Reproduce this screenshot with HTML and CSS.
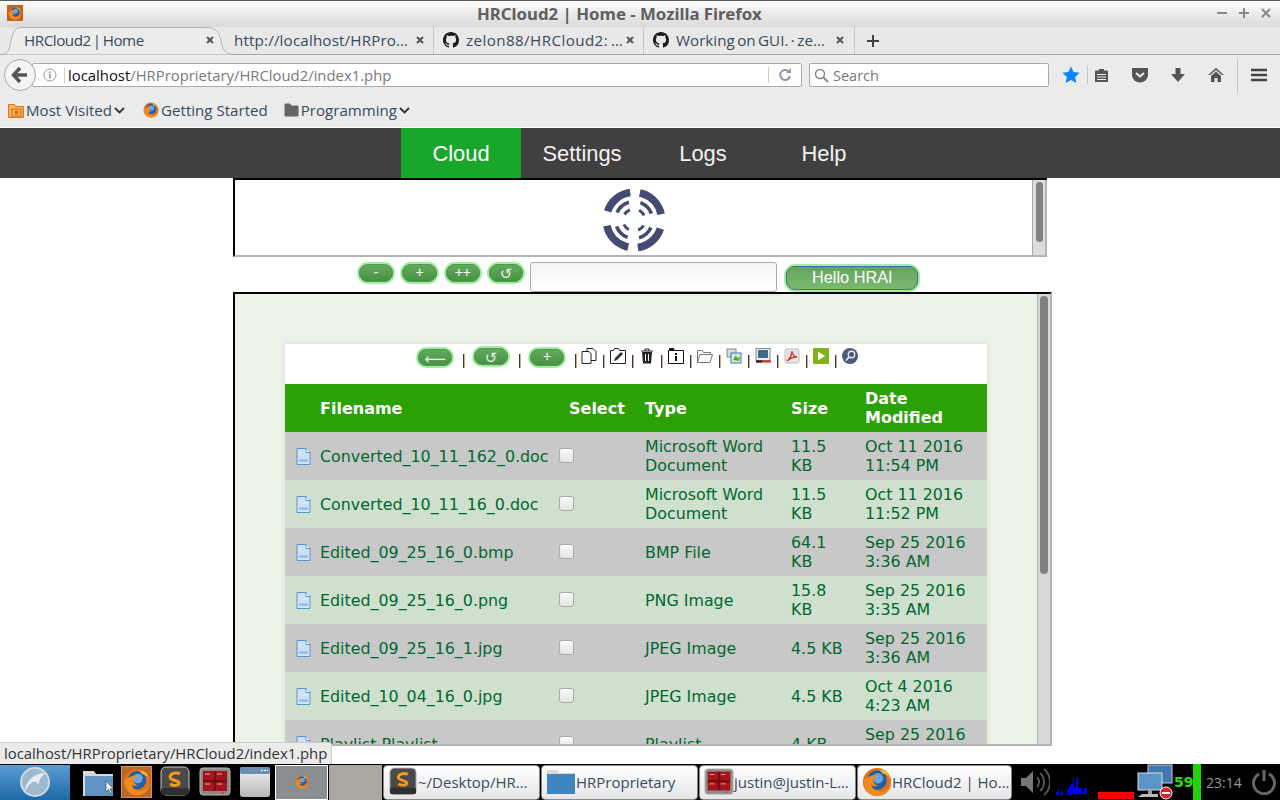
FILE: index.html
```html
<!DOCTYPE html>
<html lang="en">
<head>
<meta charset="utf-8">
<title>HRCloud2 | Home</title>
<link rel="stylesheet" href="styles.css">
</head>
<body>
<svg class="defs" width="0" height="0">
  <symbol id="ff" viewBox="0 0 32 32">
    <circle cx="16" cy="16" r="15" fill="#e8701a"/>
    <circle cx="16" cy="14" r="10.5" fill="#1f5fa8"/>
    <circle cx="17" cy="12" r="5.5" fill="#6ea6dc"/>
    <path d="M2 13c-1 9 5 18 14 18 8 0 14-5 15-13-2 5-6 8-11 8-6 0-9-3-10-7 2 2 5 2 7 1-3-1-5-3-5-6 1-3 3-5 5-6-5 0-10 2-13 5z" fill="#f28a1c"/>
    <path d="M19 3c4 0 9 3 11 9-2-3-5-5-8-5z" fill="#f7c12b"/>
  </symbol>
  <symbol id="gh" viewBox="0 0 16 16">
    <path fill="#1b1b1b" d="M8 0C3.58 0 0 3.58 0 8c0 3.54 2.29 6.53 5.47 7.59.4.07.55-.17.55-.38 0-.19-.01-.82-.01-1.49-2.01.37-2.53-.49-2.69-.94-.09-.23-.48-.94-.82-1.13-.28-.15-.68-.52-.01-.53.63-.01 1.08.58 1.23.82.72 1.21 1.87.87 2.33.66.07-.52.28-.87.51-1.07-1.78-.2-3.64-.89-3.64-3.95 0-.87.31-1.59.82-2.15-.08-.2-.36-1.02.08-2.12 0 0 .67-.21 2.2.82.64-.18 1.32-.27 2-.27.68 0 1.36.09 2 .27 1.53-1.04 2.2-.82 2.2-.82.44 1.1.16 1.92.08 2.12.51.56.82 1.27.82 2.15 0 3.07-1.87 3.75-3.65 3.95.29.25.54.73.54 1.48 0 1.07-.01 1.93-.01 2.2 0 .21.15.46.55.38A8.013 8.013 0 0016 8c0-4.42-3.58-8-8-8z"/>
  </symbol>
  <symbol id="close" viewBox="0 0 10 10">
    <path d="M2 2l6 6M8 2l-6 6" stroke="#555" stroke-width="2" fill="none"/>
  </symbol>
  <symbol id="file" viewBox="0 0 15 17">
    <path d="M1 .5h9l4 4v12H1z" fill="#cfe2f7" stroke="#5b93d2"/>
    <path d="M10 .5v4h4" fill="#fff" stroke="#5b93d2"/>
    <rect x="3" y="11.5" width="9" height="2" fill="#84b3e6"/>
  </symbol>
  <symbol id="sublime" viewBox="0 0 32 32">
    <rect x="2" y="1" width="28" height="28" rx="5" fill="#4a4a4a" stroke="#c8c8c8"/>
    <rect x="2" y="22" width="28" height="7" rx="2" fill="#2f2f2f"/>
    <path d="M21 8c-3-2-10-1-10 3s9 3 9 6-6 3-9 1" fill="none" stroke="#f09a22" stroke-width="3"/>
  </symbol>
  <symbol id="term" viewBox="0 0 32 32">
    <rect x="1" y="2" width="30" height="27" rx="3" fill="#8a8a86" stroke="#bbb"/>
    <rect x="4" y="5" width="24" height="20" fill="#a5141b"/>
    <path d="M4 15h24M16 5v20" stroke="#4a0508"/>
    <path d="M6 8h5M18 8h5M6 18h5M18 18h5" stroke="#f0a8a8"/>
    <circle cx="24" cy="27" r="1" fill="#e03030"/>
  </symbol>
</svg>

<header class="title-bar">
  <span class="title-icon"><svg width="14" height="14"><use href="#ff"/></svg></span>
  <span class="title-text">HRCloud2 | Home - Mozilla Firefox</span>
  <div class="win-btns">
    <svg width="12" height="12" viewBox="0 0 12 12"><path d="M1 6h10" stroke="#888" stroke-width="2"/></svg>
    <svg width="12" height="12" viewBox="0 0 12 12"><path d="M1 6h10M6 1v10" stroke="#888" stroke-width="2"/></svg>
    <svg width="12" height="12" viewBox="0 0 12 12"><path d="M2 2l8 8M10 2l-8 8" stroke="#888" stroke-width="2"/></svg>
  </div>
</header>

<nav class="tab-bar">
  <svg class="tab-shape" width="234" height="28" viewBox="0 0 234 28"><path d="M0 27.500C8 27.500 9 24 11 14 13 4 15 .5 22 .5H206C216 .5 219 5 221 14 223 23 225 27.500 234 27.500" fill="#ececec" stroke="#b4b4b4"/></svg>
  <div class="tab tab-active"><span class="tab-label">HRCloud2 | Home</span><svg class="tab-x"><use href="#close"/></svg></div>
  <div class="tab tab-2"><span class="tab-label">http://localhost/HRPro…</span><svg class="tab-x"><use href="#close"/></svg></div>
  <div class="tab tab-3"><svg class="tab-gh"><use href="#gh"/></svg><span class="tab-label">zelon88/HRCloud2: …</span><svg class="tab-x"><use href="#close"/></svg></div>
  <div class="tab tab-4"><svg class="tab-gh"><use href="#gh"/></svg><span class="tab-label">Working on GUI. · ze…</span><svg class="tab-x"><use href="#close"/></svg></div>
  <svg class="new-tab" width="16" height="16" viewBox="0 0 16 16"><path d="M2 8h12M8 2v12" stroke="#444" stroke-width="2"/></svg>
</nav>

<div class="nav-bar">
  <div class="back-btn"><svg width="18" height="18" viewBox="0 0 18 18"><path d="M9 2L2.500 9 9 16M3 9h13" fill="none" stroke="#555" stroke-width="3.400"/></svg></div>
  <div class="url-box">
    <svg class="info" width="14" height="14" viewBox="0 0 14 14"><circle cx="7" cy="7" r="6" fill="none" stroke="#999"/><path d="M7 6v4.500M7 3.500v1.500" stroke="#888" stroke-width="1.400"/></svg>
    <span class="url-sep"></span>
    <span class="url-text"><b>localhost</b>/HRProprietary/HRCloud2/index1.php</span>
    <span class="reload">
      <svg width="14" height="14" viewBox="0 0 14 14"><path d="M11.500 4.500A5 5 0 1 0 12 8" fill="none" stroke="#8a97a3" stroke-width="2"/><path d="M8 5h5V0z" fill="#8a97a3"/></svg>
    </span>
  </div>
  <div class="search-box">
    <svg width="15" height="15" viewBox="0 0 15 15"><circle cx="6" cy="6" r="4.500" fill="none" stroke="#888" stroke-width="1.500"/><path d="M9.500 9.500L14 14" stroke="#888" stroke-width="2"/></svg>
    <span>Search</span>
  </div>
  <svg class="tool star" width="18" height="18" viewBox="0 0 18 18"><path d="M9 .5l2.600 5.600 6 .7-4.500 4.100 1.300 6.100L9 14l-5.400 3 1.300-6.100L.4 6.800l6-.7z" fill="#0a84ff"/></svg>
  <span class="tool-sep sep-a"></span>
  <svg class="tool reader" width="15" height="15" viewBox="0 0 15 15"><path d="M1 3.500a1 1 0 0 1 1-1h3V1h5v1.500h3a1 1 0 0 1 1 1V14H1z" fill="#555"/><path d="M3 6.500h9M3 9h9M3 11.500h9" stroke="#eee"/></svg>
  <svg class="tool pocket" width="18" height="16" viewBox="0 0 18 16"><path d="M1 1h16v7a8 7.500 0 0 1-16 0z" fill="#555"/><path d="M5 6l4 3.500L13 6" fill="none" stroke="#eee" stroke-width="2"/></svg>
  <svg class="tool download" width="16" height="16" viewBox="0 0 16 16"><path d="M5.500 1h5v6H15l-7 8-7-8h4.500z" fill="#555"/></svg>
  <svg class="tool home" width="18" height="16" viewBox="0 0 18 16"><path d="M9 1L1 8h2L9 3l6 5h2z" fill="#555"/><path d="M4 9l5-4.500L14 9v6h-3.500v-4h-3v4H4z" fill="#555"/></svg>
  <span class="tool-sep sep-b"></span>
  <svg class="tool burger" width="16" height="14" viewBox="0 0 16 14"><path d="M0 2h16M0 7h16M0 12h16" stroke="#444" stroke-width="2.400"/></svg>
</div>

<div class="bookmarks">
  <span class="bm bm-1">
    <svg width="16" height="16" viewBox="0 0 16 16"><path d="M.5 2.500h6l1 2h8v11H.5z" fill="#f6b25a" stroke="#d07a1c"/><rect x="4" y="7" width="9" height="7" fill="none" stroke="#d86a10"/><circle cx="8.500" cy="10.500" r="2" fill="#d86a10"/></svg>
    Most Visited
    <svg width="11" height="7" viewBox="0 0 11 7"><path d="M1 1l4.500 4.500L10 1" fill="none" stroke="#333" stroke-width="1.800"/></svg>
  </span>
  <span class="bm bm-2"><svg width="16" height="16"><use href="#ff"/></svg>Getting Started</span>
  <span class="bm bm-3">
    <svg width="15" height="14" viewBox="0 0 15 14"><path d="M1 1h5l1 2h7v10H1z" fill="#666" stroke="#666" stroke-linejoin="round"/></svg>
    Programming
    <svg width="11" height="7" viewBox="0 0 11 7"><path d="M1 1l4.500 4.500L10 1" fill="none" stroke="#333" stroke-width="1.800"/></svg>
  </span>
</div>

<main class="viewport">
  <nav class="app-nav">
    <a class="app-link app-link-on">Cloud</a>
    <a class="app-link">Settings</a>
    <a class="app-link">Logs</a>
    <a class="app-link">Help</a>
  </nav>

  <section class="logo-frame">
    <svg class="logo" width="64" height="64" viewBox="0 0 64 64">
      <g fill="none" stroke="#454a72">
        <circle cx="32" cy="32" r="27.700" stroke-width="7.600" pathLength="360" stroke-dasharray="64 20 66 30" transform="rotate(18 32 32)"/>
        <circle cx="32" cy="32" r="18.500" stroke-width="3.500" pathLength="360" stroke-dasharray="50 36 50 44" transform="rotate(24 32 32)"/>
        <circle cx="32" cy="32" r="11" stroke-width="3" pathLength="360" stroke-dasharray="38 50 38 54" transform="rotate(30 32 32)"/>
      </g>
    </svg>
    <div class="scroll scroll-a"><span class="thumb thumb-a"></span></div>
  </section>

  <div class="hrai-row">
    <button class="pill">-</button>
    <button class="pill">+</button>
    <button class="pill">++</button>
    <button class="pill pill-glyph">↺</button>
    <input class="hrai-input" type="text" aria-label="Message">
    <button class="hello">Hello HRAI</button>
  </div>

  <section class="cloud-frame">
    <div class="cloud-pane">
      <div class="card">
        <div class="toolbar">
          <button class="pill pill-sm pill-glyph">⟵</button><i class="bar"></i>
          <button class="pill pill-sm pill-up pill-glyph">↺</button><i class="bar"></i>
          <button class="pill pill-sm">+</button><i class="bar bar-last"></i>
          <svg class="ti" viewBox="0 0 16 16"><path d="M1 3.500h7l2 2v10H1zM6 3.500V.5h6l3 3v9h-5" fill="#fff" stroke="#222"/></svg><i class="bar"></i>
          <svg class="ti" viewBox="0 0 16 16"><path d="M.5 2.500h3l1-2h4l1 2h6v13H.5z" fill="#fff" stroke="#222"/><path d="M4 13l1-3 6-6 2 2-6 6z" fill="#333"/></svg><i class="bar"></i>
          <svg class="ti" viewBox="0 0 16 16"><path d="M3 4h10l-1 11.500H4z" fill="#222"/><path d="M2 3h12M6 3V1h4v2" fill="none" stroke="#222"/><path d="M6.500 6v7M9.500 6v7" stroke="#fff"/></svg><i class="bar"></i>
          <svg class="ti" viewBox="0 0 16 16"><path d="M.5 2.500h1V.5h4l1 2h9v13H.5z" fill="#fff" stroke="#111"/><path d="M1 1h5v2H1z" fill="#111"/><path d="M7 5h2v2H7zM7 8h2v5H7z" fill="#111"/></svg><i class="bar"></i>
          <svg class="ti" viewBox="0 0 16 16"><path d="M.5 14.500v-12h5l1 2h7v2M.5 14.500l2.500-8h12.500l-2.500 8z" fill="#fff" stroke="#777"/></svg><i class="bar"></i>
          <svg class="ti" viewBox="0 0 16 16"><rect x="1" y="1" width="9" height="8" fill="#ddd" stroke="#888"/><rect x="5" y="5" width="10" height="10" fill="#d8ecd8" stroke="#2a7ab8"/><path d="M7 12l3-5 1 3 3-1-1 4z" fill="#5aa51e"/></svg><i class="bar"></i>
          <svg class="ti" viewBox="0 0 16 16"><rect x="1" y="0.500" width="14" height="12" fill="#eee" stroke="#888"/><rect x="3" y="2" width="10" height="8" fill="#3a6a92"/><path d="M1 13.500h15" stroke="#d22" stroke-width="2"/><path d="M1 13.500h6" stroke="#124" stroke-width="2"/></svg><i class="bar"></i>
          <svg class="ti" viewBox="0 0 16 16"><rect x="1" y="1" width="14" height="14" rx="2" fill="#e4e4e4" stroke="#bbb"/><path d="M3 13c3-2 5-7 5-10 0 3 2 6 5 6-3 0-7 1-10 4z" fill="none" stroke="#d2322a" stroke-width="1.300"/></svg><i class="bar"></i>
          <svg class="ti" viewBox="0 0 16 16"><rect width="16" height="16" rx="1" fill="#7fb217"/><path d="M5 3.500l7 4.500-7 4.500z" fill="#fff"/></svg><i class="bar"></i>
          <svg class="ti" viewBox="0 0 16 16"><circle cx="8" cy="8" r="8" fill="#4c5a78"/><circle cx="9.500" cy="6.500" r="3.200" fill="none" stroke="#dfe4ee" stroke-width="1.400"/><path d="M7 9l-3 3.500" stroke="#dfe4ee" stroke-width="1.800"/></svg>
        </div>

        <div class="grid-row grid-head">
          <span></span><span>Filename</span><span class="head-sel">Select</span><span>Type</span><span>Size</span><span>Date<br>Modified</span>
        </div>

        <div class="grid-row row-odd">
          <svg class="file"><use href="#file"/></svg><span>Converted_10_11_162_0.doc</span><span><input class="chk" type="checkbox" aria-label="Select"></span><span>Microsoft Word<br>Document</span><span>11.5<br>KB</span><span>Oct 11 2016<br>11:54 PM</span>
        </div>
        <div class="grid-row row-even">
          <svg class="file"><use href="#file"/></svg><span>Converted_10_11_16_0.doc</span><span><input class="chk" type="checkbox" aria-label="Select"></span><span>Microsoft Word<br>Document</span><span>11.5<br>KB</span><span>Oct 11 2016<br>11:52 PM</span>
        </div>
        <div class="grid-row row-odd">
          <svg class="file"><use href="#file"/></svg><span>Edited_09_25_16_0.bmp</span><span><input class="chk" type="checkbox" aria-label="Select"></span><span>BMP File</span><span>64.1<br>KB</span><span>Sep 25 2016<br>3:36 AM</span>
        </div>
        <div class="grid-row row-even">
          <svg class="file"><use href="#file"/></svg><span>Edited_09_25_16_0.png</span><span><input class="chk" type="checkbox" aria-label="Select"></span><span>PNG Image</span><span>15.8<br>KB</span><span>Sep 25 2016<br>3:35 AM</span>
        </div>
        <div class="grid-row row-odd">
          <svg class="file"><use href="#file"/></svg><span>Edited_09_25_16_1.jpg</span><span><input class="chk" type="checkbox" aria-label="Select"></span><span>JPEG Image</span><span>4.5 KB</span><span>Sep 25 2016<br>3:36 AM</span>
        </div>
        <div class="grid-row row-even">
          <svg class="file"><use href="#file"/></svg><span>Edited_10_04_16_0.jpg</span><span><input class="chk" type="checkbox" aria-label="Select"></span><span>JPEG Image</span><span>4.5 KB</span><span>Oct 4 2016<br>4:23 AM</span>
        </div>
        <div class="grid-row row-odd">
          <svg class="file"><use href="#file"/></svg><span>Playlist.Playlist</span><span><input class="chk" type="checkbox" aria-label="Select"></span><span>Playlist</span><span>4 KB</span><span>Sep 25 2016<br>3:36 AM</span>
        </div>
      </div>
    </div>
    <div class="scroll scroll-b"><span class="thumb thumb-b"></span></div>
  </section>
</main>

<div class="status-tip">localhost/HRProprietary/HRCloud2/index1.php</div>

<footer class="taskbar">
  <div class="start">
    <svg width="32" height="32" viewBox="0 0 32 32"><circle cx="16" cy="16" r="14" fill="#9db8cf" stroke="#cfd8e0" stroke-width="2"/><path d="M5 26C8 14 15 7 27 7c-5 3-7 7-7 12-2-3-4-4-6-3-4 2-6 6-9 10z" fill="#e6ebef"/></svg>
  </div>
  <div class="launchers">
    <svg width="32" height="30" viewBox="0 0 32 30"><path d="M1 4h11l2 3h17v22H1z" fill="#d8d8d8"/><rect x="3" y="9" width="28" height="20" rx="1" fill="#5f93c4"/><path d="M24 14v11l2.500-2.500 2 4 1.500-.7-2-4h3.500z" fill="#eee" stroke="#333" stroke-width=".5"/></svg>
    <span class="ff-launch"><svg width="28" height="28"><use href="#ff"/></svg></span>
    <svg width="32" height="32"><use href="#sublime"/></svg>
    <svg width="34" height="32"><use href="#term"/></svg>
    <svg width="32" height="32" viewBox="0 0 32 32"><defs><linearGradient id="winbg" x1="0" y1="0" x2="0" y2="1"><stop offset="0" stop-color="#f2f2f2"/><stop offset="1" stop-color="#b8b8b8"/></linearGradient></defs><rect x="1" y="1" width="30" height="30" rx="3" fill="url(#winbg)"/><rect x="1" y="1" width="30" height="7" rx="2" fill="#6b8fb5"/><path d="M22 4.500h7" stroke="#fff" stroke-dasharray="2 1"/></svg>
  </div>
  <div class="pager">
    <div class="page page-on"><svg width="14" height="14"><use href="#ff"/></svg></div>
    <div class="page page-off"></div>
  </div>
  <div class="task"><svg width="30" height="30"><use href="#sublime"/></svg><span>~/Desktop/HR…</span></div>
  <div class="task"><svg width="30" height="26" viewBox="0 0 30 26"><path d="M1 1h10l2 3h16v21H1z" fill="#d8d8d8"/><rect x="1" y="5" width="28" height="20" fill="#3f86c0"/></svg><span>HRProprietary</span></div>
  <div class="task"><svg width="30" height="30"><use href="#term"/></svg><span>justin@justin-L…</span></div>
  <div class="task task-last"><svg width="30" height="30"><use href="#ff"/></svg><span>HRCloud2 | Ho…</span></div>
  <div class="tray">
    <svg class="speaker" width="30" height="30" viewBox="0 0 30 30"><path d="M1 11h5l7-7v22l-7-7H1z" fill="#777"/><path d="M17 10a7 7 0 0 1 0 10M20 6a12 12 0 0 1 0 18M24 2a17 17 0 0 1 0 26" fill="none" stroke="#555" stroke-width="2"/></svg>
    <svg class="graph" width="36" height="20" viewBox="0 0 36 20"><path d="M0 20v-3h2v-3h1v6h2v-4h2v4h4v-6h2v-3h2v-2h2v-6h1v9h2v-9h2v10h4v3h2v-3h3v6z" fill="#0000f0"/></svg>
    <span class="red-bar"></span>
    <svg class="net" width="36" height="36" viewBox="0 0 36 36"><rect x="11" y="1" width="24" height="18" fill="#3f78b0" stroke="#ccc"/><rect x="1" y="9" width="24" height="17" fill="#5a94c8" stroke="#ddd"/><path d="M5 30h16v3H1z" fill="#bbb"/><path d="M11 26h4v4h-4z" fill="#999"/><circle cx="29" cy="29" r="6" fill="#d8232a" stroke="#fff"/><path d="M25 29h8" stroke="#fff" stroke-width="2"/></svg>
    <b class="temp">59</b>
    <span class="green-bar"></span>
    <span class="clock">23:14</span>
    <svg class="power" width="26" height="26" viewBox="0 0 26 26"><path d="M8 5a10.500 10.500 0 1 0 10 0" fill="none" stroke="#666" stroke-width="3"/><path d="M13 1v11" stroke="#666" stroke-width="3"/></svg>
  </div>
</footer>
</body>
</html>
```
FILE: styles.css
```css
* { box-sizing: border-box; }
html, body { margin: 0; padding: 0; }
body {
  width: 1280px;
  height: 800px;
  overflow: hidden;
  position: relative;
  background: #fff;
  font-family: "Open Sans", "Noto Sans", sans-serif;
  color: #333;
}
.defs { display: block; height: 0; }

/* window title */
.title-bar {
  height: 27px;
  border-top: 1px solid #5a5a5a;
  background: linear-gradient(#fbfbfb, #dadada);
  display: flex;
  align-items: center;
  padding: 0 0 2px 7px;
}
.title-icon {
  width: 16px;
  height: 16px;
  background: #c2601c;
  display: flex;
  align-items: center;
  justify-content: center;
  flex: none;
}
.title-text {
  margin-left: 454px;
  font-family: "Noto Sans", sans-serif;
  font-weight: 700;
  font-size: 16.8px;
  color: #5f5f5f;
  white-space: nowrap;
  width: 739px;
  flex: none;
}
.win-btns { display: flex; gap: 10px; }

/* tabs */
.tab-bar {
  height: 28px;
  background: #e8e8e8;
  border-bottom: 1px solid #aaa;
  display: flex;
  font-size: 15.2px;
  word-spacing: -1.5px;
  color: #3b4a5a;
  position: relative;
}
.tab-shape { position: absolute; left: 0; top: 0; }
.tab {
  height: 27px;
  display: flex;
  align-items: center;
  padding-bottom: 1px;
  border-right: 1px solid #c4c4c4;
  white-space: nowrap;
  position: relative;
}
.tab-label { flex: 1; }
.tab-x { width: 10px; height: 10px; flex: none; }
.tab-gh { width: 16px; height: 16px; margin-right: 7px; flex: none; }
.tab-active {
  width: 226px;
  padding-left: 24px;
  padding-right: 11px;
  border-right: none;
  letter-spacing: -.45px;
}
.tab-2 { width: 208px; padding-left: 8px; padding-right: 8px; letter-spacing: .15px; }
.tab-3 { width: 210px; padding-left: 9px; padding-right: 8px; letter-spacing: .4px; }
.tab-4 { width: 211px; padding-left: 9px; padding-right: 9px; }
.new-tab { margin: 6px 0 0 10px; }

/* nav bar */
.nav-bar {
  height: 40px;
  background: #ebebeb;
  display: flex;
  align-items: center;
  padding-left: 4px;
  position: relative;
}
.back-btn {
  width: 32px;
  height: 32px;
  border-radius: 50%;
  border: 1px solid #a8a8a8;
  background: #f4f4f4;
  display: flex;
  align-items: center;
  justify-content: center;
  flex: none;
  z-index: 1;
}
.url-box {
  width: 770px;
  height: 24px;
  margin-left: -4px;
  background: #fff;
  border: 1px solid #aaa;
  border-radius: 2px;
  display: flex;
  align-items: center;
  padding-left: 10px;
  font-size: 14.85px;
  color: #7a7a7a;
}
.url-sep { width: 1px; height: 16px; background: #ccc; margin: 0 3px 0 7px; }
.url-text { flex: 1; white-space: nowrap; }
.url-text b { font-weight: 400; color: #111; }
.reload {
  width: 33px;
  height: 16px;
  border-left: 1px solid #ccc;
  display: flex;
  align-items: center;
  justify-content: center;
}
.search-box {
  width: 240px;
  height: 24px;
  margin-left: 7px;
  background: #fff;
  border: 1px solid #aaa;
  border-radius: 2px;
  display: flex;
  align-items: center;
  gap: 4px;
  padding-left: 4px;
  font-size: 14.5px;
  color: #777;
}
.tool { flex: none; }
.star { margin-left: 13px; }
.tool-sep { width: 1px; background: #c4c4c4; flex: none; }
.sep-a { height: 18px; margin-left: 7px; }
.reader { margin-left: 6px; }
.pocket { margin-left: 22px; }
.download { margin-left: 21px; }
.home { margin-left: 21px; }
.sep-b { height: 34px; margin: 2px 0 0 12px; }
.burger { margin-left: 13px; }

/* bookmarks */
.bookmarks {
  height: 32px;
  background: #ebebeb;
  display: flex;
  align-items: center;
  padding: 0 0 2px 8px;
  font-size: 15.1px;
  color: #3b4a5a;
}
.bm { display: flex; align-items: center; gap: 2px; white-space: nowrap; }
.bm-2 { margin-left: 18px; }
.bm-3 { margin-left: 16px; }

/* page */
.viewport { display: block; height: 636px; overflow: hidden; padding-top: 1px; }
.app-nav {
  height: 50px;
  background: #404040;
  display: flex;
  gap: 1px;
  padding-left: 401px;
  font-family: "Liberation Sans", Arial, sans-serif;
  font-size: 21.9px;
  color: #f2f2f2;
}
.app-link {
  width: 120px;
  padding-top: 1px;
  display: flex;
  align-items: center;
  justify-content: center;
}
.app-link-on { background: #18a72b; color: #fff; }

.logo-frame {
  width: 814px;
  height: 79px;
  margin-left: 233px;
  border-top: 2px solid #000;
  border-left: 2px solid #000;
  border-bottom: 2px solid #b4b4b4;
  display: flex;
  justify-content: flex-end;
  position: relative;
}
.logo { position: absolute; left: 367px; top: 8px; }
.scroll { flex: none; display: flex; justify-content: center; }
.scroll-a {
  width: 15px;
  background: #dcdcdc;
  border-left: 1px solid #a8a8a8;
  border-right: 2px solid #b4b4b4;
  padding-top: 2px;
}
.thumb { display: block; background: #808080; }
.thumb-a { width: 7px; height: 60px; border-radius: 4px; }
.thumb-b { width: 8px; height: 278px; border-radius: 4px; }

.hrai-row {
  height: 35px;
  margin-left: 357px;
  display: flex;
  align-items: flex-start;
}
.pill {
  width: 38.33px;
  height: 22px;
  margin: 5px 5px 0 0;
  padding: 0 0 3px;
  border: 2px solid #a0eea0;
  outline: 1px solid #4e9a4e;
  outline-offset: -3px;
  border-radius: 11px;
  background: linear-gradient(#66aa62, #46903f);
  color: #fff;
  font-family: "Liberation Sans", Arial, sans-serif;
  font-size: 14px;
  line-height: 1;
}
.pill-glyph {
  padding: 3px 0 0;
  font-weight: 400;
  color: #e4f2e4;
  font-family: "DejaVu Sans", sans-serif;
  font-size: 15px;
}
.hrai-input {
  width: 247px;
  height: 30px;
  margin-top: 5px;
  background: linear-gradient(#f4f4f4, #fff);
  border: 1px solid #aaa;
  border-radius: 3px;
}
.hello {
  width: 136px;
  height: 28px;
  margin: 7px 0 0 7px;
  padding: 0 0 2px;
  border: 2px solid #a0eea0;
  outline: 1px solid #4a6a98;
  outline-offset: -3px;
  border-radius: 11px;
  background: linear-gradient(#63a45e, #7cba70);
  color: #fff;
  font-family: "Liberation Sans", Arial, sans-serif;
  font-size: 16.3px;
}

.cloud-frame {
  width: 819px;
  height: 454px;
  margin-left: 233px;
  border-top: 2px solid #000;
  border-left: 2px solid #000;
  border-right: 2px solid #b4b4b4;
  border-bottom: 2px solid #b4b4b4;
  display: flex;
}
.cloud-pane {
  flex: 1;
  overflow: hidden;
  background: #eaf3e5;
  padding: 50px 0 0 50px;
}
.scroll-b { width: 13px; background: #d8d8d8; border-left: 1px solid #b4b4b4; padding-top: 2px; }
.card { width: 702px; background: #fff; box-shadow: 0 0 6px rgba(0,0,0,.08); }
.toolbar {
  height: 40px;
  display: flex;
  align-items: flex-start;
  padding: 3px 0 0 131px;
}
.pill-sm { width: 38px; height: 21px; margin: 0; }
.pill-up { margin-top: -1px; }
.bar {
  width: 2px;
  height: 14px;
  margin: 7px 7px 0 9px;
  background: linear-gradient(90deg, #2a3a6a 50%, #e0a868 50%);
  flex: none;
}
.bar-last { margin-right: 4px; }
.ti { width: 16px; height: 16px; flex: none; margin: 1px 0 0; }
.ti + .bar { height: 13px; margin: 8px 5px 0 6px; }

.grid-row {
  display: grid;
  grid-template-columns: 35px 239px 86px 146px 74px 122px;
  height: 48px;
  align-items: center;
  font-family: "DejaVu Sans", sans-serif;
  font-size: 15.87px;
  line-height: 19px;
  color: #00682e;
}
.grid-head { background: #2ca106; color: #fff; font-weight: 700; font-size: 16px; }
.head-sel { padding-left: 10px; }
.row-odd { background: #c8c8c8; }
.row-even { background: #cfe0cf; }
.file { width: 15px; height: 17px; margin-left: 11px; }
.chk {
  appearance: none;
  display: block;
  width: 15px;
  height: 15px;
  margin: -2px 0 0;
  border: 1px solid #aaa;
  border-radius: 3px;
  background: linear-gradient(#fafafa, #e4e4e4);
}

/* status tooltip */
.status-tip {
  position: absolute;
  left: 0;
  top: 742px;
  width: 332px;
  height: 22px;
  padding-left: 4px;
  background: #ebebeb;
  border-top: 1px solid #ccc;
  border-right: 1px solid #ccc;
  border-radius: 0 3px 0 0;
  font-size: 14.85px;
  line-height: 21px;
  color: #333;
  white-space: nowrap;
}

/* taskbar */
.taskbar {
  position: absolute;
  left: 0;
  right: 0;
  top: 764px;
  height: 36px;
  background: #000;
  display: flex;
  align-items: center;
  font-size: 15px;
}
.start {
  width: 70px;
  height: 35px;
  background: linear-gradient(#5a9bd2, #1d6aa8);
  display: flex;
  align-items: center;
  justify-content: center;
}
.launchers {
  display: flex;
  align-items: center;
  gap: 7px;
  margin-left: 12px;
  width: 192px;
}
.ff-launch {
  width: 31px;
  height: 32px;
  background: #b86a2a;
  border: 1px solid #e09040;
  display: flex;
  align-items: center;
  justify-content: center;
}
.pager { display: flex; height: 35px; margin-left: 1px; }
.page { width: 53px; height: 35px; display: flex; align-items: center; justify-content: center; }
.page-on { background: #8a8e92; border: 1px solid #fff; }
.page-off { background: #aaa6a0; margin-left: 1px; }
.task {
  width: 157px;
  height: 35px;
  margin-left: 1px;
  padding-left: 4px;
  background: linear-gradient(#fff, #e6e6e6);
  border: 1px solid #888;
  border-radius: 4px;
  display: flex;
  align-items: center;
  gap: 0;
  color: #3b4a5a;
  white-space: nowrap;
}
.task-last { width: 155px; }
.tray { display: flex; align-items: center; flex: 1; height: 36px; }
.speaker { margin-left: 8px; }
.graph { margin: 6px 0 0 6px; flex: none; }
.red-bar { width: 36px; height: 7px; background: #f00; margin: 27px 0 0 6px; flex: none; }
.net { margin-left: 3px; flex: none; }
.temp { color: #22e000; font-family: "DejaVu Sans", sans-serif; font-size: 14px; margin: 0 0 0 1px; width: 19px; }
.green-bar { width: 8px; height: 36px; background: #1fd600; }
.clock { color: #9a9a9a; font-size: 14px; margin-left: 5px; width: 45px; }
.power { flex: none; }
```
